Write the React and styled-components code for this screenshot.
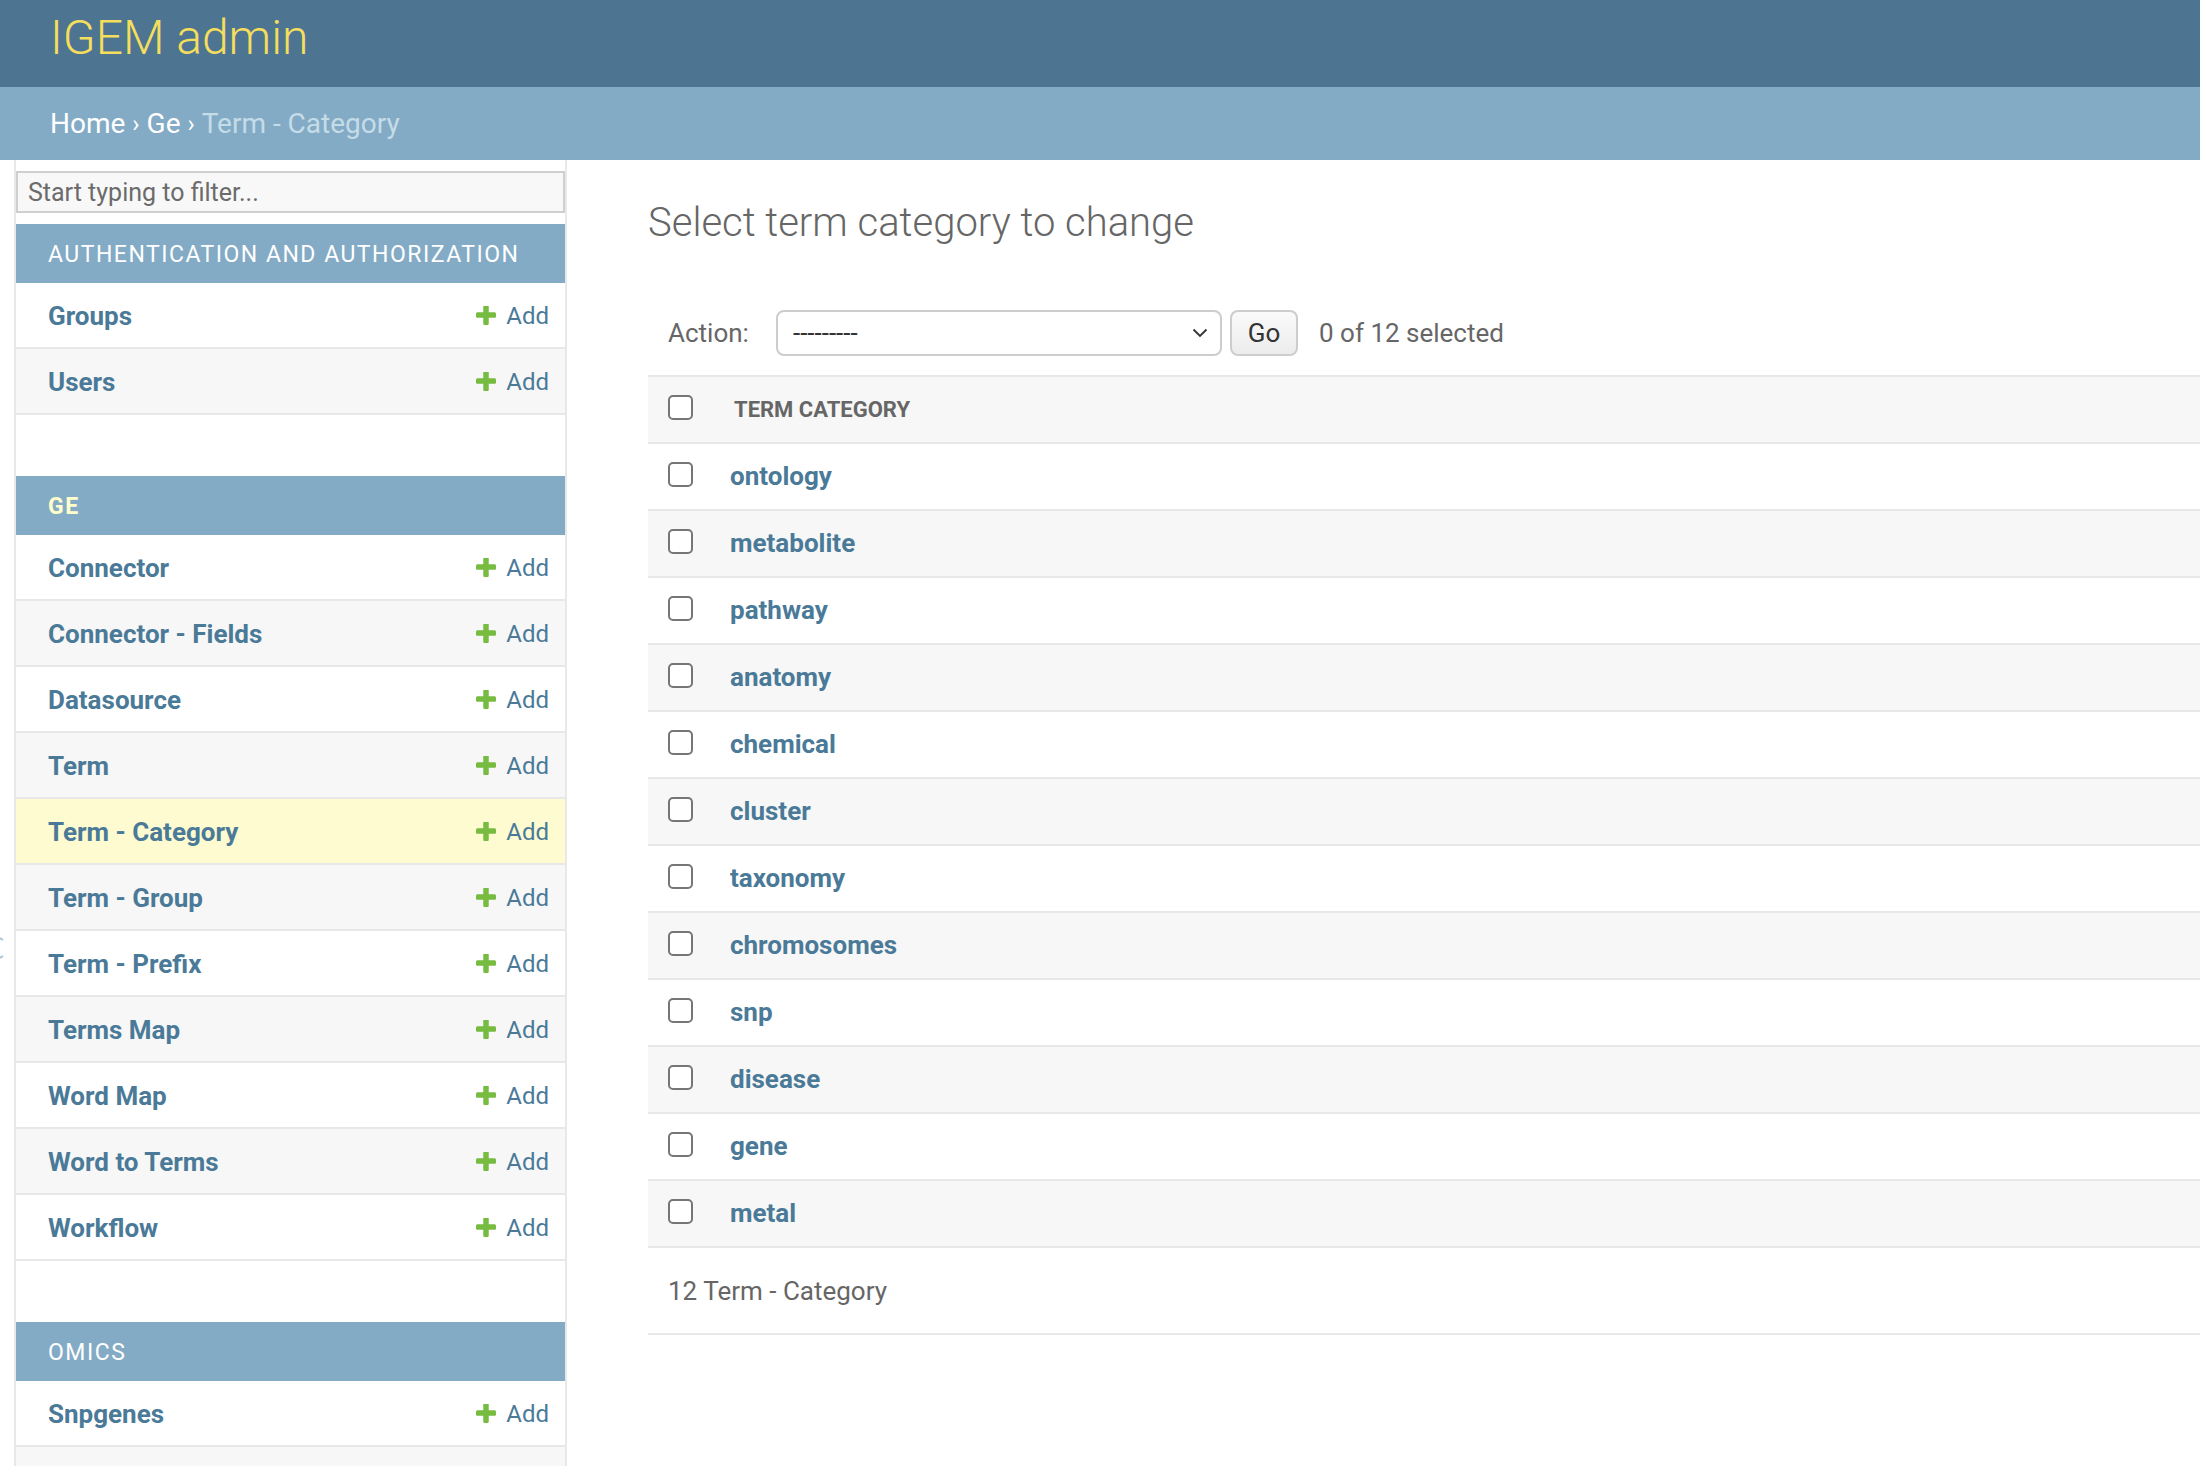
import React from "react";
import styled, { createGlobalStyle } from "styled-components";

const GlobalStyle = createGlobalStyle`
  html, body { margin: 0; padding: 0; background: #fff; }
  body { font-family: Roboto, "Liberation Sans", Arial, sans-serif; color: #333; }
  * { box-sizing: border-box; }
`;

const Page = styled.div`
  width: 2200px;
  min-height: 1466px;
  overflow: hidden;
`;

const Header = styled.header`
  height: 87px;
  background: #4d7591;
  padding: 14px 50px 0;
`;

const Branding = styled.h1`
  margin: 0;
  font-size: 48px;
  line-height: 48px;
  font-weight: 300;
  color: #f5dd5d;
`;

const Breadcrumbs = styled.nav`
  height: 73px;
  background: #84abc5;
  padding: 0 50px;
  display: flex;
  align-items: center;
  font-size: 28px;
  color: #c4dce8;
`;

const Crumb = styled.a`
  color: #fff;
  text-decoration: none;
`;

const Sep = styled.span`
  color: #fff;
  margin: 0 7px;
  font-size: 24px;
`;

const Body = styled.div`
  display: flex;
  align-items: flex-start;
`;

const ToggleColumn = styled.div`
  width: 14px;
  flex-shrink: 0;
  padding-top: 776px;
`;

const ToggleMark = () => (
  <svg width="5" height="24" viewBox="0 0 5 24" aria-hidden="true">
    <path d="M0 2 L3 4 M0 22 L3 20" stroke="#a9c4d4" strokeWidth="2" fill="none" />
  </svg>
);

const Sidebar = styled.aside`
  width: 553px;
  flex-shrink: 0;
  border-left: 2px solid #e8e8e8;
  border-right: 2px solid #e8e8e8;
  padding-top: 11px;
  min-height: 1306px;
`;

const FilterInput = styled.input`
  display: block;
  width: 100%;
  height: 42px;
  margin: 0 0 11px;
  padding: 0 10px;
  border: 2px solid #cfcfcf;
  background: #f8f8f8;
  font-family: Roboto, "Liberation Sans", Arial, sans-serif;
  font-size: 25px;
  color: #333;
  outline: none;
  &::placeholder { color: #6b6b6b; }
`;

const Module = styled.section`
  margin-bottom: 61px;
`;

const Caption = styled.div`
  height: 59px;
  background: #84abc5;
  padding: 2px 0 0 32px;
  display: flex;
  align-items: center;
  font-size: 23px;
  letter-spacing: 1.5px;
  text-transform: uppercase;
  color: ${(p) => (p.$current ? "#ffffcc" : "#fff")};
  font-weight: ${(p) => (p.$current ? 700 : 400)};
`;

const ModelRow = styled.div`
  height: 66px;
  display: flex;
  align-items: center;
  justify-content: space-between;
  padding: 2px 16px 0 32px;
  border-bottom: 2px solid #e8e8e8;
  background: ${(p) => (p.$current ? "#fdfbcf" : p.$alt ? "#f7f7f7" : "#fff")};
`;

const ModelLink = styled.a`
  font-size: 26px;
  font-weight: 700;
  color: #4a7a98;
  text-decoration: none;
`;

const AddLink = styled.a`
  display: flex;
  align-items: center;
  gap: 10px;
  font-size: 24px;
  color: #4a7a98;
  text-decoration: none;
`;

const PlusIcon = () => (
  <svg width="20" height="20" viewBox="192 192 1408 1408" aria-hidden="true">
    <path
      fill="#77bb41"
      d="M1600 736v192q0 40-28 68t-68 28h-416v416q0 40-28 68t-68 28h-192q-40 0-68-28t-28-68v-416h-416q-40 0-68-28t-28-68v-192q0-40 28-68t68-28h416v-416q0-40 28-68t68-28h192q40 0 68 28t28 68v416h416q40 0 68 28t28 68z"
    />
  </svg>
);

const Main = styled.main`
  flex: 1;
  padding: 39px 0 0 81px;
  min-width: 0;
`;

const Title = styled.h1`
  margin: 0 0 63px;
  font-size: 40px;
  line-height: 48px;
  font-weight: 300;
  color: #666;
`;

const Actions = styled.div`
  display: flex;
  align-items: center;
  height: 46px;
  padding-left: 20px;
  margin-bottom: 19px;
  font-size: 26px;
  color: #666;
`;

const ActionLabel = styled.span`
  width: 108px;
`;

const SelectBox = styled.div`
  width: 446px;
  height: 46px;
  border: 2px solid #cdcdcd;
  border-radius: 8px;
  background: #fff;
  display: flex;
  align-items: center;
  justify-content: space-between;
  padding: 0 12px 0 15px;
  color: #333;
  font-size: 26px;
`;

const GoButton = styled.button`
  margin-left: 8px;
  width: 68px;
  height: 46px;
  border: 2px solid #cdcdcd;
  border-radius: 8px;
  background: linear-gradient(#fafafa, #ececec);
  font-family: Roboto, "Liberation Sans", Arial, sans-serif;
  font-size: 26px;
  color: #333;
  padding: 0;
`;

const Counter = styled.span`
  margin-left: 21px;
`;

const Table = styled.div`
  border-top: 2px solid #e8e8e8;
`;

const TableRow = styled.div`
  height: 67px;
  display: flex;
  align-items: center;
  padding-left: 20px;
  border-bottom: 2px solid #e8e8e8;
  background: ${(p) => (p.$alt ? "#f7f7f7" : "#fff")};
`;

const Check = styled.input.attrs({ type: "checkbox" })`
  appearance: none;
  margin: 0 0 4px;
  width: 25px;
  height: 25px;
  border: 2px solid #767676;
  border-radius: 5px;
  background: #fff;
  flex-shrink: 0;
`;

const HeaderLabel = styled.span`
  margin-left: 41px;
  font-size: 22px;
  font-weight: 700;
  color: #666;
`;

const RowLink = styled.a`
  margin-left: 37px;
  margin-bottom: 2px;
  font-size: 26px;
  font-weight: 700;
  color: #4a7a98;
  text-decoration: none;
`;

const Paginator = styled.div`
  height: 87px;
  display: flex;
  align-items: center;
  padding-left: 20px;
  border-bottom: 2px solid #e8e8e8;
  font-size: 26px;
  color: #666;
`;

const Chevron = () => (
  <svg width="16" height="10" viewBox="0 0 16 10" aria-hidden="true">
    <path d="M1.5 1.5 L8 8 L14.5 1.5" fill="none" stroke="#333" strokeWidth="1.8" />
  </svg>
);

const modules = [
  { name: "Authentication and Authorization", models: ["Groups", "Users"] },
  {
    name: "GE",
    current: true,
    models: [
      "Connector",
      "Connector - Fields",
      "Datasource",
      "Term",
      "Term - Category",
      "Term - Group",
      "Term - Prefix",
      "Terms Map",
      "Word Map",
      "Word to Terms",
      "Workflow",
    ],
  },
  { name: "Omics", models: ["Snpgenes", ""] },
];

const categories = [
  "ontology",
  "metabolite",
  "pathway",
  "anatomy",
  "chemical",
  "cluster",
  "taxonomy",
  "chromosomes",
  "snp",
  "disease",
  "gene",
  "metal",
];

export default function App() {
  return (
    <Page>
      <GlobalStyle />
      <Header>
        <Branding>IGEM admin</Branding>
      </Header>
      <Breadcrumbs>
        <Crumb href="#">Home</Crumb>
        <Sep>›</Sep>
        <Crumb href="#">Ge</Crumb>
        <Sep>›</Sep>
        <span>Term - Category</span>
      </Breadcrumbs>
      <Body>
        <ToggleColumn>
          <ToggleMark />
        </ToggleColumn>
        <Sidebar>
          <FilterInput placeholder="Start typing to filter..." />
          {modules.map((m) => (
            <Module key={m.name}>
              <Caption $current={m.current}>{m.name}</Caption>
              {m.models.map((model, i) => (
                <ModelRow
                  key={model + i}
                  $alt={i % 2 === 1}
                  $current={model === "Term - Category"}
                >
                  {model ? (
                    <>
                      <ModelLink href="#">{model}</ModelLink>
                      <AddLink href="#">
                        <PlusIcon />
                        Add
                      </AddLink>
                    </>
                  ) : null}
                </ModelRow>
              ))}
            </Module>
          ))}
        </Sidebar>
        <Main>
          <Title>Select term category to change</Title>
          <Actions>
            <ActionLabel>Action:</ActionLabel>
            <SelectBox>
              <span>---------</span>
              <Chevron />
            </SelectBox>
            <GoButton>Go</GoButton>
            <Counter>0 of 12 selected</Counter>
          </Actions>
          <Table>
            <TableRow $alt>
              <Check />
              <HeaderLabel>TERM CATEGORY</HeaderLabel>
            </TableRow>
            {categories.map((c, i) => (
              <TableRow key={c} $alt={i % 2 === 1}>
                <Check />
                <RowLink href="#">{c}</RowLink>
              </TableRow>
            ))}
          </Table>
          <Paginator>12 Term - Category</Paginator>
        </Main>
      </Body>
    </Page>
  );
}
